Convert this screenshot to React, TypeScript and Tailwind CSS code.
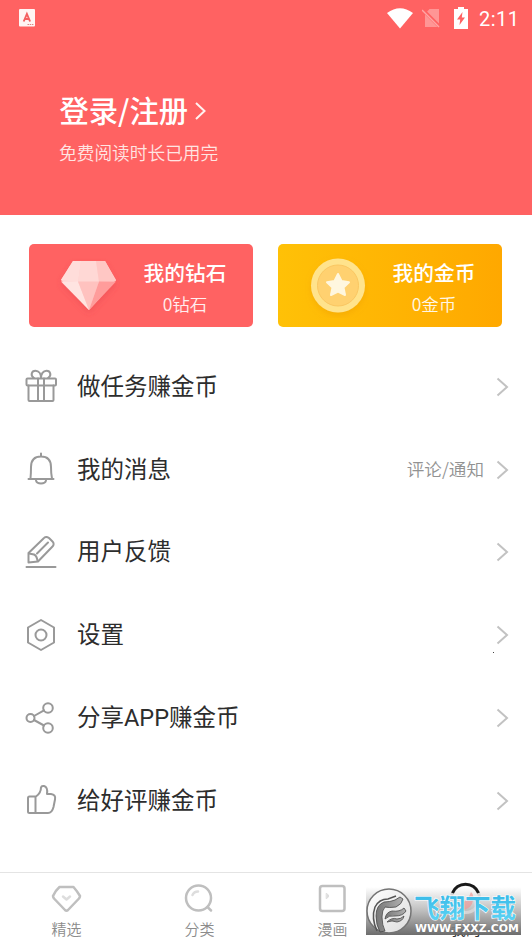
import type { ReactNode } from "react";

const stroke = { fill: "none", stroke: "#999", strokeWidth: 2, strokeLinejoin: "round", strokeLinecap: "round" } as const;

function Chevron() {
  return (
    <svg width="14" height="20" viewBox="0 0 14 20" className="mt-px shrink-0">
      <path d="M1.500 1.500 11 10 1.500 18.500" fill="none" stroke="#c2c2c2" strokeWidth="2" />
    </svg>
  );
}

const icons = {
  gift: (
    <svg width="34" height="34" viewBox="0 0 34 34" {...stroke}>
      <rect x="2.500" y="9.500" width="29.500" height="7" rx="1" />
      <path d="M4.500 16.500V31Q4.500 32 5.500 32H28.500Q29.500 32 29.500 31V16.500M14 9.500V31.500M20 9.500V31.500M10 9C6 6.500 7.500 1.800 11.500 1.800C15 1.800 17 5 17 9C17 5 19 1.800 22.500 1.800C26.500 1.800 28 6.500 24 9" />
    </svg>
  ),
  bell: (
    <svg width="34" height="34" viewBox="0 0 34 34" {...stroke}>
      <path d="M17 1.500V4M4.500 27H29.500M6.500 26.500C7 22 7 19 7 15C7 8 11 4.500 17 4.500S27 8 27 15C27 19 27 22 28 26.500M12 28.500C13 32.500 21 32.500 22 28.500" />
    </svg>
  ),
  pencil: (
    <svg width="34" height="34" viewBox="0 0 34 34" {...stroke}>
      <path d="M2.500 32H31.500M4.500 27.500 4.500 18 19.500 3.500C21 1.500 23 1.500 25 3L28.500 6.500C30 8 30 10 28.500 11.500L14 26.500Z" />
      <path d="M5 18.500 10 19.500Q13 21 13.500 26M13 18.500 24 7.500" />
    </svg>
  ),
  settings: (
    <svg width="34" height="34" viewBox="0 0 34 34" {...stroke}>
      <path d="M17 2 30 9.500V24.500L17 32 4 24.500V9.500Z" />
      <circle cx="17" cy="17" r="5.500" />
    </svg>
  ),
  share: (
    <svg width="34" height="34" viewBox="0 0 34 34" {...stroke}>
      <circle cx="6.500" cy="17" r="4" />
      <circle cx="24" cy="7" r="4.800" />
      <circle cx="24" cy="27" r="4.800" />
      <path d="M10 15 20 9.300M10 19 20 24.500" />
    </svg>
  ),
  thumb: (
    <svg width="34" height="34" viewBox="0 0 34 34" {...stroke}>
      <path d="M5.500 13.500H12Q17 10 17 4.500Q17.500 2.500 20 3Q24 4 23 11H27Q32 11.500 31 16.500L29.500 24Q28 30 24 30H5.500Q4 30 4 28.500V15Q4 13.500 5.500 13.500ZM11.500 13.500V30" />
    </svg>
  ),
};

const rows: { icon: ReactNode; label: string; note?: string }[] = [
  { icon: icons.gift, label: "做任务赚金币" },
  { icon: icons.bell, label: "我的消息", note: "评论/通知" },
  { icon: icons.pencil, label: "用户反馈" },
  { icon: icons.settings, label: "设置" },
  { icon: icons.share, label: "分享APP赚金币" },
  { icon: icons.thumb, label: "给好评赚金币" },
];

function StatusBar() {
  return (
    <div className="flex h-9 items-center justify-between pl-[19px] pr-[13px]">
      <svg width="16" height="18" viewBox="0 0 16 18">
        <rect width="16" height="17.500" rx="1" fill="#fff5f4" />
        <path d="M4.700 12.500 7.900 5 11.100 12.500M5.800 10H10" fill="none" stroke="#f45f60" strokeWidth="1.900" />
        <path d="M8.500 15.500H15" stroke="#d88" strokeWidth="1" strokeDasharray="1.500 .7" />
      </svg>
      <div className="flex items-center">
        <svg width="26" height="21" viewBox="0 0 26 21">
          <path d="M0 5Q13-4.500 26 5L13 20.500Z" fill="#fff" />
        </svg>
        <svg width="19" height="20" viewBox="0 0 19 20" className="ml-[9px]">
          <path d="M7.500 1H17V19H3V6Z" fill="#ff9695" />
          <path d="M1 2 18 19" stroke="#ff6262" strokeWidth="3.500" />
          <path d="M0 2 17 19" stroke="#ffa6a5" strokeWidth="1.400" />
        </svg>
        <svg width="14" height="22" viewBox="0 0 14 22" className="ml-[13px]">
          <path d="M4 0H10V2H14V22H0V2H4Z" fill="#fff" />
          <path d="M8.500 5 3 12.500H6.200L5.500 18 11 10.500H7.800Z" fill="#ff6262" />
        </svg>
        <span className="ml-[11px] mt-px w-[40px] font-[Roboto,sans-serif] text-[20px] leading-5 tracking-[0.5px]">2:11</span>
      </div>
    </div>
  );
}

function DiamondArt() {
  return (
    <svg width="64" height="62" viewBox="0 0 64 62" className="mt-[5px]">
      <defs>
        <filter id="gemShadow" x="-30%" y="-30%" width="160%" height="170%"><feDropShadow dx="0" dy="3" stdDeviation="3" floodColor="#df3e46" floodOpacity=".35" /></filter>
      </defs>
      <g filter="url(#gemShadow)" transform="translate(1)">
        <path d="M16 4H48L59 23 32 53 4 23Z" fill="#ffd3d0" />
        <path d="M16 4H24L21 25 4 23Z" fill="#ffddda" />
        <path d="M24 4H39L42 25H21Z" fill="#ffd8d5" />
        <path d="M39 4H48L59 24 42 25Z" fill="#ffc7c4" />
        <path d="M4 24.500H21L32 53Z" fill="#ffe4e1" />
        <path d="M21 24.500H42L32 53Z" fill="#ffc2bf" />
        <path d="M42 24.500H59L32 53Z" fill="#ff9c9b" />
      </g>
    </svg>
  );
}

function CoinArt() {
  return (
    <svg width="64" height="64" viewBox="0 0 64 64" className="mt-px">
      <defs>
        <filter id="coinShadow" x="-30%" y="-30%" width="160%" height="160%"><feDropShadow dx="0" dy="3" stdDeviation="3" floodColor="#df8500" floodOpacity=".25" /></filter>
      </defs>
      <g transform="translate(1)">
        <circle cx="32" cy="31.500" r="27" fill="#ffe38c" filter="url(#coinShadow)" />
        <circle cx="32" cy="31.500" r="20.500" fill="#ffd170" stroke="#fac762" />
        <path d="M32 20 35.500 27 43 28.300 37.500 33.500 39 41 32 37.500 25 41 26.500 33.500 21 28.300 28.500 27Z" fill="#fff7df" stroke="#fff7df" strokeWidth="2" strokeLinejoin="round" />
      </g>
    </svg>
  );
}

function Card({ art, title, value, tone }: { art: ReactNode; title: string; value: string; tone: string }) {
  return (
    <div className={`flex h-[83px] w-[224px] items-center rounded-[5px] pl-[27px] text-white ${tone}`}>
      {art}
      <div className="ml-[22px] mt-[3px] flex w-[86px] flex-col items-center">
        <span className="whitespace-nowrap text-[20.7px] font-medium leading-[30px]">{title}</span>
        <span className="mt-[4px] text-[17.5px] font-[350] leading-[26px] text-white/90">{value}</span>
      </div>
    </div>
  );
}

const tabIcon = { fill: "none", stroke: "#bfbfbf", strokeWidth: 2.5, strokeLinejoin: "round", strokeLinecap: "round" } as const;

function Tab({ icon, label }: { icon: ReactNode; label: string }) {
  return (
    <div className="flex w-[133px] flex-col items-center pt-[10px]">
      {icon}
      <span className="mt-px text-[15px] font-[350] leading-[22px] text-[#8c8c8c]">{label}</span>
    </div>
  );
}

function Watermark() {
  return (
    <svg width="158" height="69" viewBox="366 878 158 69" className="absolute left-[366px] top-[5px]">
      <defs>
        <linearGradient id="plate" x1="0" y1="0" x2="0" y2="1"><stop stopColor="#fff" /><stop offset=".5" stopColor="#b8b8b8" /><stop offset="1" stopColor="#626262" /></linearGradient>
        <linearGradient id="cyan" x1="0" y1="0" x2="0" y2="1"><stop stopColor="#30b4e4" /><stop offset="1" stopColor="#62d6f6" /></linearGradient>
        <linearGradient id="seal" x1="0" y1="0" x2="1" y2="1"><stop stopColor="#fff" /><stop offset="1" stopColor="#ddd" /></linearGradient>
        <linearGradient id="wing" x1="0" y1="0" x2="1" y2="0"><stop stopColor="#777" /><stop offset="1" stopColor="#b0b0b0" /></linearGradient>
      </defs>
      <text x="451" y="935" fontSize="15" fill="#333">我的</text>
      <rect x="366" y="887" width="155" height="48" fill="url(#plate)" opacity=".93" />
      <circle cx="465.500" cy="898.500" r="14" fill="none" stroke="#d4d4d4" strokeWidth="3" />
      <path d="M452.500 893A14 14 0 0 1 478.500 893" fill="none" stroke="#191919" strokeWidth="3" />
      <path d="M461 903Q468 901 471 892Q475 895 472 904Q468 911 459 910" fill="#ed9998" opacity=".7" />
      <circle cx="389" cy="911" r="22" fill="url(#seal)" stroke="#747474" strokeWidth="1.500" />
      <g fill="url(#wing)" stroke="#484848" strokeWidth=".8" strokeLinejoin="round">
        <path d="M380 932Q376 925 376 916Q376 905 384 902Q390 902 395 900L400 897L403 899Q402 904 396 907Q389 908 385 907Q382 910 382 917Q382 925 385 931Z" />
        <path d="M385 919Q386 912 392 911Q400 912 404 908L406 911Q403 916 395 916Q389 915 385 919Z" />
        <path d="M387 922Q392 917 397 919Q401 919 404 916Q403 921 397 922Q392 920 387 922Z" />
      </g>
      <path d="M377 931Q371 918 375 907Q379 899 388 899L396 896" fill="none" stroke="#555" strokeWidth="1.500" />
      <text x="414" y="917.500" fontSize="26" fontWeight="700" textLength="102" lengthAdjust="spacingAndGlyphs" fill="url(#cyan)" stroke="#fff" strokeWidth="1.200" paintOrder="stroke">飞翔下载</text>
      <text x="415" y="932" fontSize="11" fontWeight="700" textLength="104" lengthAdjust="spacingAndGlyphs" fill="#fff" stroke="#777" strokeWidth=".6" paintOrder="stroke" className="font-['DejaVu_Sans',sans-serif]">WWW.FXXZ.COM</text>
    </svg>
  );
}

export default function App() {
  return (
    <main className="flex h-[947px] w-[532px] flex-col overflow-hidden bg-white font-['Noto_Sans_CJK_SC',sans-serif] text-[#2d2d2d]">
      <header className="h-[214.500px] shrink-0 bg-[#ff6262] text-white">
        <StatusBar />
        <div className="flex items-center pl-[59.500px] pt-[51px]">
          <h1 className="text-[29.300px] font-medium leading-[44px]">登录/注册</h1>
          <svg width="12" height="18" viewBox="0 0 12 18" className="ml-[7px] mt-[4px]">
            <path d="M1 1 9.500 9 1 17" fill="none" stroke="#fff2f0" strokeWidth="2" />
          </svg>
        </div>
        <p className="mt-[8px] pl-[59px] text-[17.700px] font-[350] leading-[26px] text-[#ffe5e2]">免费阅读时长已用完</p>
      </header>
      <section className="flex shrink-0 gap-[25px] pl-[29px] pt-[29.500px]">
        <Card art={<DiamondArt />} title="我的钻石" value="0钻石" tone="bg-[#ff6262]" />
        <Card art={<CoinArt />} title="我的金币" value="0金币" tone="bg-linear-to-r from-[#ffc107] to-[#ffa800]" />
      </section>
      <section className="mt-[18px] flex shrink-0 flex-col">
        {rows.map((row) => (
          <div key={row.label} className="flex h-[82.800px] items-center pl-6 pr-[22px]">
            {row.icon}
            <span className="mt-px ml-[19px] flex-1 font-[Roboto,'Noto_Sans_CJK_SC',sans-serif] text-[23.500px] leading-9">{row.label}</span>
            {row.note && <span className="mr-[12px] text-[17.600px] font-[350] text-[#929292]">{row.note}</span>}
            <Chevron />
          </div>
        ))}
      </section>
      <nav className="relative mt-auto flex h-[75px] shrink-0 border-t border-[#e4e4e4]">
        <Tab label="精选" icon={
          <svg width="34" height="34" viewBox="0 0 34 34" {...tabIcon}>
            <path d="M9.500 4H23.500Q27 8 30 13Q30 14 29 15.500L18 27Q16.500 28.500 15 27L4 15.500Q3 14 3 13Q5 8 9.500 4Z" />
            <path d="M13 13.500 16.500 16.500 20 13.500" stroke="#ddd" />
          </svg>
        } />
        <Tab label="分类" icon={
          <svg width="34" height="34" viewBox="0 0 34 34" {...tabIcon}>
            <circle cx="15.500" cy="15" r="12.500" /><path d="M24.500 24 28 27.500" /><path d="M9.500 12Q11 8.500 15 8.500" stroke="#ddd" />
          </svg>
        } />
        <Tab label="漫画" icon={
          <svg width="34" height="34" viewBox="0 0 34 34" {...tabIcon}>
            <rect x="4" y="3" width="24.500" height="25" rx="2.500" /><path d="M10.500 10.500 12.500 12V14L10.500 15.500Z" fill="#ddd" stroke="#ddd" strokeWidth="1" />
          </svg>
        } />
        <Watermark />
      </nav>
      <i className="absolute left-[493px] top-[652px] size-px bg-[#444]" />
    </main>
  );
}
